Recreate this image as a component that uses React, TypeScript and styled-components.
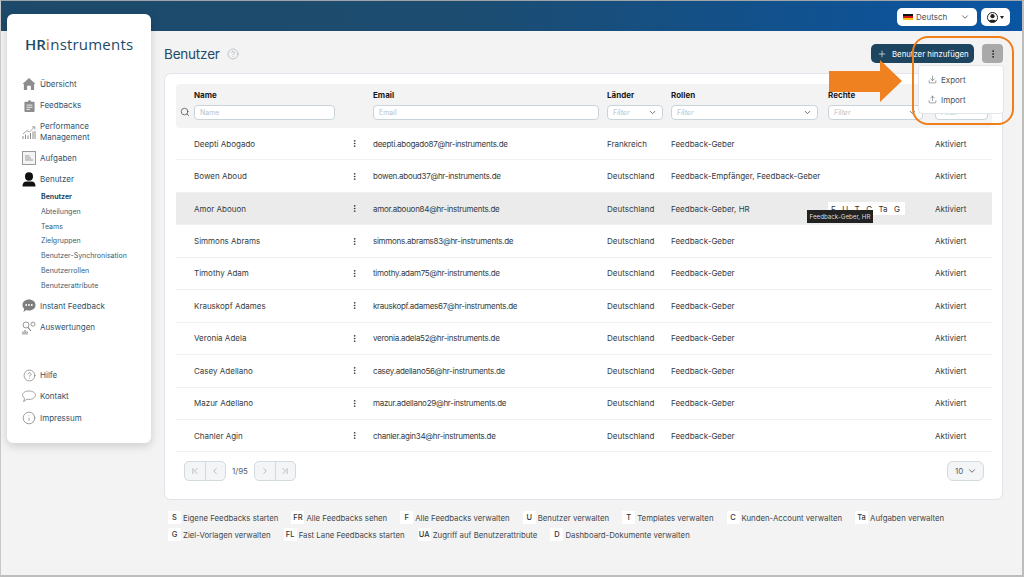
import React from 'react';
import styled, { createGlobalStyle } from 'styled-components';
import {
  ChevronDown,
  ChevronFirst,
  ChevronLast,
  ChevronLeft,
  ChevronRight,
  CircleHelp,
  EllipsisVertical,
  Info,
  Plus,
  Search,
  Upload,
  Download,
} from 'lucide-react';

const GlobalStyle = createGlobalStyle`
  html, body {
    margin: 0;
    padding: 0;
    background: #f3f3f3;
    font-family: Inter, "Open Sans", "Liberation Sans", sans-serif;
  }
  * { box-sizing: border-box; }
`;

const Frame = styled.div`
  position: relative;
  width: 1024px;
  height: 577px;
  overflow: hidden;
  background: #f3f3f3;
  border-top: 1px solid #9fa4a8;
  border-left: 1px solid #c8c8c8;
  border-right: 2px solid #bdbdbd;
  border-bottom: 2px solid #bdbdbd;
`;

const TopBar = styled.header`
  height: 30px;
  display: flex;
  justify-content: flex-end;
  align-items: flex-start;
  gap: 4px;
  padding: 7px 12px 0 0;
  background: linear-gradient(90deg, #1d4a6a 0%, #1c4c70 45%, #0a55a3 100%);
`;

const LangSelect = styled.div`
  width: 80px;
  height: 18px;
  display: flex;
  align-items: center;
  padding: 0 7px 0 6px;
  background: #fff;
  border-radius: 5px;
  font-size: 8px;
  color: #44505a;
`;

const Flag = styled.span`
  width: 10px;
  height: 6px;
  margin-right: 3px;
  background: linear-gradient(#111 0 33%, #d8121b 33% 66%, #f5c400 66%);
`;

const LangLabel = styled.span`
  flex: 1;
`;

const UserButton = styled.div`
  width: 29px;
  height: 18px;
  display: flex;
  align-items: center;
  justify-content: center;
  gap: 2px;
  background: #fff;
  border-radius: 5px;
`;

const Caret = styled.span`
  width: 0;
  height: 0;
  border-left: 2.5px solid transparent;
  border-right: 2.5px solid transparent;
  border-top: 3px solid #222;
`;

const Body = styled.div`
  display: flex;
  align-items: flex-start;
`;

const Sidebar = styled.aside`
  position: relative;
  z-index: 2;
  width: 144px;
  height: 429px;
  margin: -17px 0 0 6px;
  padding: 22px 0 0 15px;
  background: #fff;
  border-radius: 6px;
  box-shadow: 0 3px 10px rgba(0, 0, 0, 0.16);
`;

const Logo = styled.div`
  height: 16px;
  margin: 0 0 21.6px 3px;
  font-family: "Open Sans", sans-serif;
  font-size: 15px;
  line-height: 16px;
  letter-spacing: 0.2px;
  color: #1d4a68;
  white-space: nowrap;
`;

const LogoStrong = styled.span`
  font-weight: 600;
  letter-spacing: 0;
`;

const LogoAccent = styled.span`
  color: #ef7f1a;
  font-weight: 600;
`;

const NavItem = styled.div<{ $h?: number; $mt?: number }>`
  height: ${({ $h }) => $h ?? 21.5}px;
  margin-top: ${({ $mt }) => $mt ?? 0}px;
  display: flex;
  align-items: center;
  gap: 4px;
  font-size: 8px;
  line-height: 11px;
  color: #31536b;
`;

const NavIcon = styled.span`
  width: 14px;
  height: 16px;
  flex: none;
  display: flex;
  align-items: center;
  justify-content: center;
  color: #8d8d8d;
`;

const SubList = styled.div`
  margin: -1.5px 0 2.7px 19px;
`;

const SubItem = styled.div<{ $active?: boolean }>`
  height: 14.8px;
  display: flex;
  align-items: center;
  font-size: 7px;
  font-weight: ${({ $active }) => ($active ? 700 : 400)};
  color: ${({ $active }) => ($active ? '#1d4a68' : '#3b5d75')};
`;

const Main = styled.main`
  width: 839px;
  margin-left: 13px;
`;

const TitleRow = styled.div`
  height: 42px;
  display: flex;
  align-items: center;
  padding-top: 4px;
`;

const Title = styled.h1`
  margin: 0 7px 0 0;
  font-size: 13.5px;
  letter-spacing: -0.2px;
  font-weight: 400;
  color: #1f4a68;
`;

const TitleHelp = styled.span`
  flex: 1;
  display: flex;
  color: #a9b4bc;
`;

const AddButton = styled.button`
  width: 103px;
  height: 19px;
  margin-top: -1px;
  display: flex;
  align-items: center;
  gap: 5px;
  padding: 0 0 0 6px;
  border: 0;
  border-radius: 5px;
  background: #1d4560;
  color: #fff;
  font: inherit;
  font-size: 7.8px;
  white-space: nowrap;
`;

const KebabButton = styled.button`
  width: 21px;
  height: 19px;
  margin: -1px 0 0 8px;
  display: flex;
  align-items: center;
  justify-content: center;
  padding: 0;
  border: 0;
  border-radius: 4px;
  background: #a9a9a9;
  color: #222;
`;

const Card = styled.section`
  height: 427px;
  padding: 10px 10px 0 11px;
  background: #fff;
  border: 1px solid #dfe5ea;
  border-radius: 7px;
`;

const columns = '179px 234px 64px 157px 107px 1fr';

const HeadRow = styled.div`
  position: relative;
  height: 44px;
  display: grid;
  grid-template-columns: ${columns};
  padding: 5px 0 0 18px;
  background: #f3f3f3;
  border-radius: 4px;
`;

const SearchMark = styled.span`
  position: absolute;
  left: 0;
  top: 23px;
  width: 18px;
  display: flex;
  justify-content: center;
  color: #333;
`;

const HeadCell = styled.div``;

const HeadLabel = styled.div`
  height: 12px;
  margin-bottom: 4px;
  display: flex;
  align-items: center;
  font-size: 8px;
  font-weight: 700;
  color: #1b1b1b;
`;

const FilterBox = styled.div<{ $w: number; $italic?: boolean }>`
  width: ${({ $w }) => $w}px;
  height: 15px;
  display: flex;
  align-items: center;
  justify-content: space-between;
  padding: 0 5px;
  background: #fff;
  border: 1px solid #c9d3da;
  border-radius: 4px;
  font-size: 7px;
  font-style: ${({ $italic }) => ($italic ? 'italic' : 'normal')};
  color: #b8c2c9;
`;

const Row = styled.div<{ $hover?: boolean }>`
  height: 32.45px;
  display: grid;
  grid-template-columns: ${columns};
  align-items: center;
  padding-left: 18px;
  border-bottom: 1px solid #f1f1f1;
  background: ${({ $hover }) => ($hover ? '#ebebeb' : '#fff')};
  font-size: 8px;
  color: #363b40;
  white-space: nowrap;
`;

const NameCell = styled.div`
  display: flex;
  align-items: center;
  justify-content: space-between;
  padding-right: 14.5px;
`;

const EmailCell = styled.div`
  letter-spacing: -0.27px;
`;

const RightsBadges = styled.div`
  width: 77px;
  height: 13px;
  display: flex;
  align-items: center;
  justify-content: space-between;
  padding: 0 5px 0 3px;
  background: #fff;
  font-size: 8px;
  color: #333;
`;

const Tooltip = styled.div`
  position: absolute;
  left: 806px;
  top: 209px;
  width: 66px;
  height: 13px;
  display: flex;
  align-items: center;
  justify-content: center;
  background: #222;
  color: #ddd;
  font-size: 6.2px;
  white-space: nowrap;
  z-index: 3;
`;

const Pager = styled.div`
  display: flex;
  justify-content: space-between;
  align-items: center;
  padding: 9px 8px 0 8px;
`;

const PagerGroup = styled.div`
  display: flex;
  align-items: center;
`;

const PagerButton = styled.div<{ $side: 'left' | 'right' }>`
  width: 21.5px;
  height: 20px;
  display: flex;
  align-items: center;
  justify-content: center;
  background: #f3f5f6;
  color: #7f8b93;
  border: 1px solid #d3dade;
  border-radius: ${({ $side }) => ($side === 'left' ? '5px 0 0 5px' : '0 5px 5px 0')};
  margin-left: ${({ $side }) => ($side === 'left' ? 0 : -1)}px;
`;

const PagerText = styled.span`
  width: 28px;
  text-align: center;
  font-size: 8px;
  color: #56616a;
`;

const SizeSelect = styled.div`
  width: 37px;
  height: 20px;
  display: flex;
  align-items: center;
  justify-content: space-between;
  padding: 0 6px 0 7px;
  background: #f3f5f6;
  border: 1px solid #d3dade;
  border-radius: 6px;
  font-size: 8px;
  color: #56616a;
`;

const Legend = styled.div`
  display: flex;
  flex-wrap: wrap;
  column-gap: 13px;
  row-gap: 4px;
  padding: 11px 0 0 4px;
`;

const LegendItem = styled.div`
  height: 13px;
  display: flex;
  align-items: center;
  gap: 2px;
  font-size: 7.8px;
  color: #43484d;
  white-space: nowrap;
`;

const LegendKey = styled.span`
  width: 13px;
  height: 13px;
  display: flex;
  align-items: center;
  justify-content: center;
  background: #fff;
  font-size: 7.5px;
  font-weight: 500;
  color: #333;
`;

const Highlight = styled.div`
  position: absolute;
  left: 911px;
  top: 35px;
  width: 102px;
  height: 89px;
  border: 2px solid #ef7f1a;
  border-radius: 16px;
  z-index: 5;
`;

const Menu = styled.div`
  position: absolute;
  left: 917px;
  top: 64px;
  width: 86px;
  height: 49px;
  padding-top: 3.5px;
  background: #fff;
  border: 1px solid #e3e6e8;
  border-radius: 4px;
  z-index: 4;
`;

const MenuItem = styled.div`
  height: 20px;
  display: flex;
  align-items: center;
  gap: 4px;
  padding-left: 9px;
  font-size: 8px;
  color: #4a5258;
`;

const ArrowMark = styled.svg`
  position: absolute;
  left: 828px;
  top: 59px;
  z-index: 6;
`;

const HomeIcon = () => (
  <svg width="14" height="14" viewBox="0 0 15 15" fill="currentColor">
    <path d="M7.5 1 14.5 7.5 13 7.5 13 14 9.5 14 9.5 9.5 5.5 9.5 5.5 14 2 14 2 7.5 .5 7.5Z" />
  </svg>
);

const ClipboardIcon = () => (
  <svg width="11" height="14" viewBox="0 0 13 15">
    <path fill="currentColor" d="M1.5 2.5H4.5L5.5.8H7.5L8.5 2.5H11.5Q12.5 2.5 12.5 3.5V13.5Q12.5 14.5 11.5 14.5H1.5Q.5 14.5 .5 13.5V3.5Q.5 2.5 1.5 2.5Z" />
    <path stroke="#fff" strokeWidth="1" d="M3 6.5H10M3 9H10M3 11.5H7" />
  </svg>
);

const ChartIcon = () => (
  <svg width="14" height="15" viewBox="0 0 14 15" fill="none" stroke="currentColor">
    <path strokeWidth="1" d="M1 14V11M3.5 14V9.5M6 14V10.5M8.5 14V8M11 14V6.5M13 14V6" />
    <path strokeWidth=".8" d="M1 9 5 5.5 7.5 7 12.5 2M10 1.8H12.8V4.5" />
  </svg>
);

const TasksIcon = () => (
  <svg width="14" height="14" viewBox="0 0 14 14" fill="none" stroke="#9a9a9a">
    <rect x=".5" y=".5" width="13" height="13" fill="#f4f4f4" />
    <path strokeWidth="1" d="M3 5H7.5M3 7H9M3 9H11" />
  </svg>
);

const UserIcon = () => (
  <svg width="14" height="15" viewBox="0 0 14 15" fill="#111">
    <ellipse cx="7" cy="4.5" rx="4" ry="4.2" />
    <path d="M.5 14.5Q.5 9.5 4.5 9.5H9.5Q13.5 9.5 13.5 14.5Z" />
  </svg>
);

const BubbleIcon = () => (
  <svg width="14" height="14" viewBox="0 0 14 14">
    <path fill="#7e7e7e" d="M7 .5C10.8.5 13.5 2.8 13.5 6S10.8 11.5 7 11.5C6 11.5 5 11.4 4.2 11L1.5 13 2.2 9.8C1 8.8.5 7.5.5 6 .5 2.8 3.2.5 7 .5Z" />
    <circle cx="4.2" cy="6" r=".9" fill="#fff" />
    <circle cx="7" cy="6" r=".9" fill="#fff" />
    <circle cx="9.8" cy="6" r=".9" fill="#fff" />
  </svg>
);

const ReportsIcon = () => (
  <svg width="14" height="14" viewBox="0 0 14 14" fill="none" stroke="#7e7e7e" strokeWidth=".8">
    <circle cx="4" cy="4" r="3" />
    <circle cx="11" cy="3.2" r="2" />
    <path d="M6 6.5 9 10M1 13.5V10.5M3 13.5V9M5 13.5V10.5" strokeWidth="1.1" />
  </svg>
);

const SpeechIcon = () => (
  <svg width="14" height="13" viewBox="0 0 14 13" fill="none" stroke="#8a8a8a" strokeWidth=".8">
    <path d="M7 1C10.5 1 13.4 2.6 13.4 5.2S10.5 9.4 7 9.4C6.2 9.4 5.600 9.3 5 9.2L1.600 11.600 2.600 8.300C1.300 7.600.6 6.500.6 5.200.6 2.600 3.500 1 7 1Z" />
  </svg>
);

const UserBadge = () => (
  <svg width="11" height="11" viewBox="0 0 11 11">
    <circle cx="5.5" cy="5.5" r="5" fill="#fff" stroke="#222" />
    <circle cx="5.5" cy="4.2" r="2.1" fill="#222" />
    <path d="M1.8 9C2.4 7.2 8.6 7.2 9.2 9 7.5 10.8 3.5 10.8 1.8 9Z" fill="#222" />
  </svg>
);

const users: [string, string, string, string][] = [
  ['Deepti Abogado', 'deepti.abogado87@hr-instruments.de', 'Frankreich', 'Feedback-Geber'],
  ['Bowen Aboud', 'bowen.aboud37@hr-instruments.de', 'Deutschland', 'Feedback-Empfänger, Feedback-Geber'],
  ['Amor Abouon', 'amor.abouon84@hr-instruments.de', 'Deutschland', 'Feedback-Geber, HR'],
  ['Simmons Abrams', 'simmons.abrams83@hr-instruments.de', 'Deutschland', 'Feedback-Geber'],
  ['Timothy Adam', 'timothy.adam75@hr-instruments.de', 'Deutschland', 'Feedback-Geber'],
  ['Krauskopf Adames', 'krauskopf.adames67@hr-instruments.de', 'Deutschland', 'Feedback-Geber'],
  ['Veronia Adela', 'veronia.adela52@hr-instruments.de', 'Deutschland', 'Feedback-Geber'],
  ['Casey Adellano', 'casey.adellano56@hr-instruments.de', 'Deutschland', 'Feedback-Geber'],
  ['Mazur Adellano', 'mazur.adellano29@hr-instruments.de', 'Deutschland', 'Feedback-Geber'],
  ['Chanler Agin', 'chanler.agin34@hr-instruments.de', 'Deutschland', 'Feedback-Geber'],
];

const subNav = [
  'Benutzer',
  'Abteilungen',
  'Teams',
  'Zielgruppen',
  'Benutzer-Synchronisation',
  'Benutzerrollen',
  'Benutzerattribute',
];

const legend: [string, string][] = [
  ['S', 'Eigene Feedbacks starten'],
  ['FR', 'Alle Feedbacks sehen'],
  ['F', 'Alle Feedbacks verwalten'],
  ['U', 'Benutzer verwalten'],
  ['T', 'Templates verwalten'],
  ['C', 'Kunden-Account verwalten'],
  ['Ta', 'Aufgaben verwalten'],
  ['G', 'Ziel-Vorlagen verwalten'],
  ['FL', 'Fast Lane Feedbacks starten'],
  ['UA', 'Zugriff auf Benutzerattribute'],
  ['D', 'Dashboard-Dokumente verwalten'],
];

const App = () => (
  <Frame>
    <GlobalStyle />
    <TopBar>
      <LangSelect>
        <Flag />
        <LangLabel>Deutsch</LangLabel>
        <ChevronDown size={10} color="#555" />
      </LangSelect>
      <UserButton>
        <UserBadge />
        <Caret />
      </UserButton>
    </TopBar>
    <Body>
      <Sidebar>
        <Logo>
          <LogoStrong>HR</LogoStrong>
          <LogoAccent>i</LogoAccent>nstruments
        </Logo>
        <NavItem><NavIcon><HomeIcon /></NavIcon>Übersicht</NavItem>
        <NavItem><NavIcon><ClipboardIcon /></NavIcon>Feedbacks</NavItem>
        <NavItem $h={31}><NavIcon><ChartIcon /></NavIcon>Performance<br />Management</NavItem>
        <NavItem><NavIcon><TasksIcon /></NavIcon>Aufgaben</NavItem>
        <NavItem><NavIcon><UserIcon /></NavIcon>Benutzer</NavItem>
        <SubList>
          {subNav.map((item, i) => (
            <SubItem key={item} $active={i === 0}>{item}</SubItem>
          ))}
        </SubList>
        <NavItem><NavIcon><BubbleIcon /></NavIcon>Instant Feedback</NavItem>
        <NavItem><NavIcon><ReportsIcon /></NavIcon>Auswertungen</NavItem>
        <NavItem $mt={26}><NavIcon><CircleHelp size={13} strokeWidth={1.5} color="#8a8a8a" /></NavIcon>Hilfe</NavItem>
        <NavItem><NavIcon><SpeechIcon /></NavIcon>Kontakt</NavItem>
        <NavItem><NavIcon><Info size={14} strokeWidth={1.4} color="#8a8a8a" /></NavIcon>Impressum</NavItem>
      </Sidebar>
      <Main>
        <TitleRow>
          <Title>Benutzer</Title>
          <TitleHelp><CircleHelp size={12} strokeWidth={1.5} /></TitleHelp>
          <AddButton><Plus size={10} strokeWidth={1.5} />Benutzer hinzufügen</AddButton>
          <KebabButton><EllipsisVertical size={10} strokeWidth={2.2} /></KebabButton>
        </TitleRow>
        <Card>
          <HeadRow>
            <SearchMark><Search size={10} strokeWidth={1.5} /></SearchMark>
            <HeadCell>
              <HeadLabel>Name</HeadLabel>
              <FilterBox $w={141}>Name</FilterBox>
            </HeadCell>
            <HeadCell>
              <HeadLabel>Email</HeadLabel>
              <FilterBox $w={226}>Email</FilterBox>
            </HeadCell>
            <HeadCell>
              <HeadLabel>Länder</HeadLabel>
              <FilterBox $w={56} $italic>Filter<ChevronDown size={9} color="#444" /></FilterBox>
            </HeadCell>
            <HeadCell>
              <HeadLabel>Rollen</HeadLabel>
              <FilterBox $w={147} $italic>Filter<ChevronDown size={9} color="#444" /></FilterBox>
            </HeadCell>
            <HeadCell>
              <HeadLabel>Rechte</HeadLabel>
              <FilterBox $w={95} $italic>Filter<ChevronDown size={9} color="#444" /></FilterBox>
            </HeadCell>
            <HeadCell>
              <HeadLabel />
              <FilterBox $w={53} $italic>Filter<ChevronDown size={9} color="#444" /></FilterBox>
            </HeadCell>
          </HeadRow>
          {users.map(([name, email, country, roles], i) => (
            <Row key={email} $hover={i === 2}>
              <NameCell>
                {name}
                <EllipsisVertical size={9} strokeWidth={2.2} color="#333" />
              </NameCell>
              <EmailCell>{email}</EmailCell>
              <div>{country}</div>
              <div>{roles}</div>
              <div>
                {i === 2 && (
                  <RightsBadges>
                    <span>F</span><span>U</span><span>T</span><span>C</span><span>Ta</span><span>G</span>
                  </RightsBadges>
                )}
              </div>
              <div>Aktiviert</div>
            </Row>
          ))}
          <Pager>
            <PagerGroup>
              <PagerButton $side="left"><ChevronFirst size={10} strokeWidth={1.3} /></PagerButton>
              <PagerButton $side="right"><ChevronLeft size={10} strokeWidth={1.3} /></PagerButton>
              <PagerText>1/95</PagerText>
              <PagerButton $side="left"><ChevronRight size={10} strokeWidth={1.3} /></PagerButton>
              <PagerButton $side="right"><ChevronLast size={10} strokeWidth={1.3} /></PagerButton>
            </PagerGroup>
            <SizeSelect>10<ChevronDown size={10} color="#555" /></SizeSelect>
          </Pager>
        </Card>
        <Legend>
          {legend.map(([key, label]) => (
            <LegendItem key={key}><LegendKey>{key}</LegendKey>{label}</LegendItem>
          ))}
        </Legend>
      </Main>
    </Body>
    <Tooltip>Feedback-Geber, HR</Tooltip>
    <Menu>
      <MenuItem><Download size={9} strokeWidth={1.4} />Export</MenuItem>
      <MenuItem><Upload size={9} strokeWidth={1.4} />Import</MenuItem>
    </Menu>
    <Highlight />
    <ArrowMark width="74" height="44" viewBox="0 0 74 44">
      <path fill="#f08120" d="M0 11H51V0L73 21 51 42V32H0Z" />
    </ArrowMark>
  </Frame>
);

export default App;
